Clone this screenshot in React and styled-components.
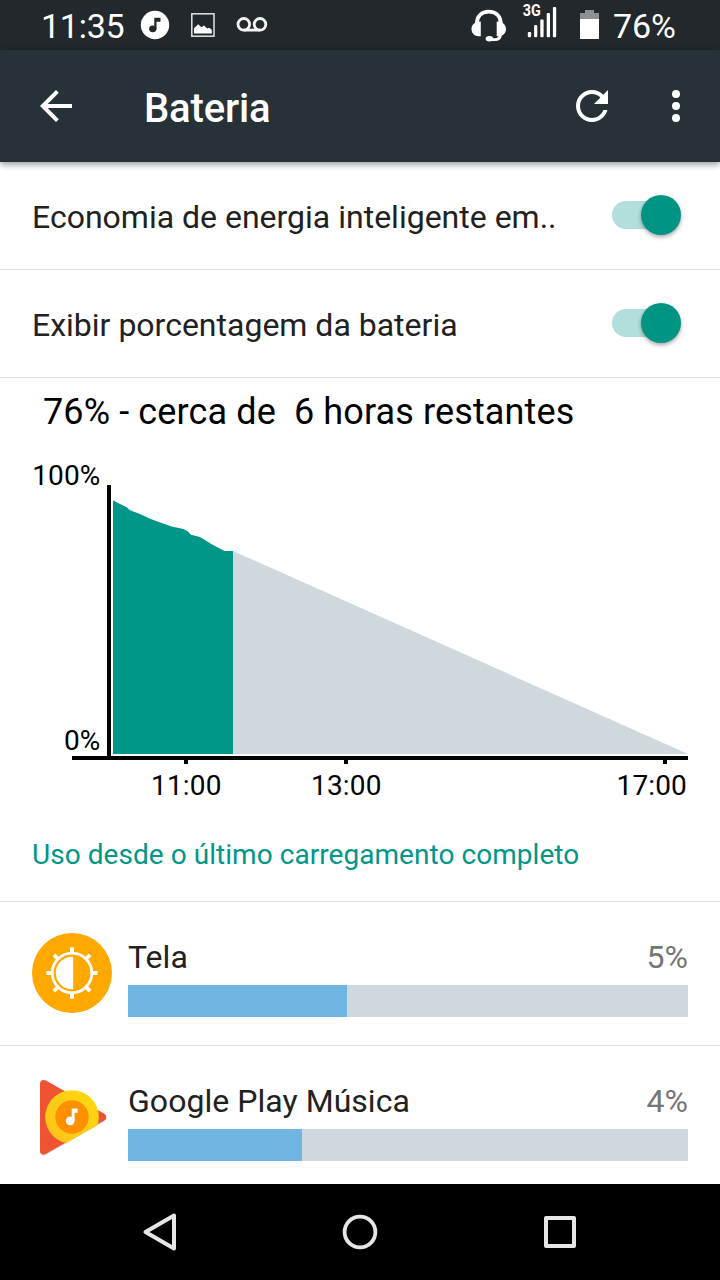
import React from "react";
import styled, { createGlobalStyle } from "styled-components";

const GlobalStyle = createGlobalStyle`
  *, *::before, *::after { box-sizing: border-box; }
  body { margin: 0; background: #fff; font-family: Roboto, "Noto Sans", sans-serif; }
  svg { display: block; flex: none; }
`;

const Screen = styled.div`
  width: 720px;
  height: 1280px;
  display: flex;
  flex-direction: column;
  overflow: hidden;
  background: #fff;
`;

const StatusBar = styled.header`
  flex: none;
  height: 50px;
  padding: 0 44px 0 41px;
  display: flex;
  justify-content: space-between;
  background: #22282b;
  color: #fff;
`;

const StatusGroup = styled.div`
  display: flex;
  gap: ${(p) => p.$gap}px;
`;

const StatusText = styled.span`
  font-size: 34px;
  letter-spacing: ${(p) => p.$spacing || 0}px;
  line-height: 52px;
  white-space: nowrap;
`;

const AppBar = styled.div`
  flex: none;
  height: 112px;
  padding: 0 20px 0 32px;
  display: flex;
  align-items: center;
  background: #273238;
  color: #fff;
  box-shadow: 0 2px 7px rgba(0, 0, 0, 0.45);
  z-index: 1;
`;

const Title = styled.h1`
  flex: 1;
  margin: 0;
  padding: 6px 0 0 64px;
  font-size: 40px;
  font-weight: 500;
  letter-spacing: -0.15px;
  line-height: 48px;
`;

const IconButton = styled.button`
  width: 48px;
  height: 48px;
  margin: 0 ${(p) => p.$after || 0}px 0 0;
  padding: 0;
  border: 0;
  background: none;
  color: inherit;
`;

const Content = styled.main`
  flex: 1;
  min-height: 0;
  overflow: hidden;
`;

const SettingRow = styled.label`
  height: 108px;
  padding: 2px 40px 0 32px;
  display: flex;
  align-items: center;
  justify-content: space-between;
  border-bottom: 1px solid #dfdfdf;
  font-size: 32px;
  color: #212121;
  white-space: nowrap;
`;

const Track = styled.span`
  width: 68px;
  height: 28px;
  margin-bottom: 3px;
  display: flex;
  align-items: center;
  justify-content: flex-end;
  border-radius: 14px;
  background: #b2dfdb;
`;

const Thumb = styled.span`
  flex: none;
  width: 40px;
  height: 40px;
  margin-right: -1px;
  border-radius: 50%;
  background: #009485;
  box-shadow: 0 2px 4px rgba(0, 0, 0, 0.35);
`;

const HistoryPanel = styled.section`
  height: 524px;
  border-bottom: 1px solid #dfdfdf;
`;

const Summary = styled.h2`
  margin: 0;
  padding: 12px 0 0 43px;
  height: 72px;
  font-size: 36px;
  font-weight: 400;
  letter-spacing: 0.12px;
  line-height: 44px;
  white-space: pre;
  color: #000;
`;

const Caption = styled.p`
  margin: 0;
  padding-left: 32px;
  font-size: 28px;
  letter-spacing: 0.05px;
  line-height: 34px;
  color: #009688;
`;

const UsageRow = styled.article`
  height: 144px;
  padding: 31px 32px 0;
  display: flex;
  gap: 16px;
  border-bottom: 1px solid #dfdfdf;
`;

const UsageBody = styled.div`
  flex: 1;
`;

const UsageHead = styled.div`
  height: 52px;
  padding-top: 5px;
  display: flex;
  justify-content: space-between;
  font-size: 32px;
  letter-spacing: 0.04px;
  line-height: 38px;
  color: #212121;
`;

const Percent = styled.span`
  color: #757575;
`;

const Meter = styled.div`
  height: 32px;
  background: #cfd8dd;
`;

const MeterFill = styled.div`
  width: ${(p) => p.$width}px;
  height: 100%;
  background: #6eb5e1;
`;

const NavBar = styled.nav`
  flex: none;
  height: 96px;
  padding: 0 136px;
  display: flex;
  align-items: center;
  justify-content: space-between;
  background: #000;
  color: #e6e6e6;
`;

const MusicStatusIcon = () => (
  <svg width="30" height="50" viewBox="140 0 30 50">
    <circle cx="155" cy="25" r="14.2" fill="#fff" />
    <ellipse cx="152.8" cy="28.8" rx="3.7" ry="3.4" fill="#22282b" />
    <path d="M154.3 17.8h6.2v3.9h-4V28.8h-2.2z" fill="#22282b" />
  </svg>
);

const PictureStatusIcon = () => (
  <svg width="24" height="50" viewBox="191 0 24 50">
    <rect x="191.8" y="13.8" width="22.2" height="22.4" fill="none" stroke="#d6dad9" strokeWidth="1.6" />
    <path d="M194 33.5v-5.2l4.2-4 3.2 3 2.6-1.8 3.2 3 2-.8 2.6 2v3.8z" fill="#fff" />
  </svg>
);

const VoicemailIcon = () => (
  <svg width="32" height="50" viewBox="235 0 32 50">
    <g fill="none" stroke="#f4f4f4" strokeWidth="2.8">
      <circle cx="242.8" cy="24.3" r="5.8" />
      <circle cx="259" cy="24.3" r="5.8" />
      <path d="M242.8 30.1H259" />
    </g>
  </svg>
);

const HeadsetIcon = () => (
  <svg width="36" height="50" viewBox="471 0 36 50">
    <path d="M476.8 24c0-8 5-12.4 12-12.4S500.8 16 500.8 24" fill="none" stroke="#fff" strokeWidth="3.8" />
    <path d="M480.8 21.5v14.7h-2.2c-4 0-7.1-3-7.1-7.2 0-3.7 2.7-6.5 6-7zM496.7 21.5v14.7h2.2c4 0 7.1-3 7.1-7.2 0-3.7-2.7-6.5-6-7z" fill="#fff" />
    <path d="M500.4 35c-.3 3-2.5 4.7-5.6 4.7h-3" fill="none" stroke="#fff" strokeWidth="2.8" />
    <ellipse cx="489.4" cy="38.8" rx="3.8" ry="2.7" fill="#fff" />
  </svg>
);

const SignalIcon = () => (
  <svg width="36" height="50" viewBox="522 0 36 50">
    <text x="522.8" y="15.8" fontSize="17" fontWeight="700" textLength="18" lengthAdjust="spacingAndGlyphs" fill="#fff">3G</text>
    <g fill="#fff">
      <rect x="527.8" y="32" width="3.4" height="5.2" rx="1" />
      <rect x="534.1" y="25" width="3.2" height="12.2" rx="1" />
      <rect x="540.3" y="19.4" width="3.3" height="17.8" rx="1" />
      <rect x="546.7" y="13" width="3.3" height="24.2" rx="1" />
      <rect x="552.9" y="7" width="3.3" height="30.2" rx="1" />
    </g>
  </svg>
);

const BatteryIcon = () => (
  <svg width="19" height="50" viewBox="580 0 19 50">
    <path d="M585 10h9v3h5v6.5h-19V13h5z" fill="#8d9092" />
    <path d="M580 19h19v20h-19z" fill="#fff" />
  </svg>
);

const BackArrow = () => (
  <svg width="48" height="48" viewBox="0 0 24 24" fill="currentColor">
    <path d="M20 11H7.83l5.59-5.59L12 4l-8 8 8 8 1.41-1.41L7.83 13H20v-2z" />
  </svg>
);

const RefreshIcon = () => (
  <svg width="48" height="48" viewBox="0 0 24 24" fill="currentColor">
    <path d="M17.65 6.35C16.2 4.9 14.21 4 12 4c-4.42 0-7.99 3.58-7.99 8s3.57 8 7.99 8c3.73 0 6.84-2.55 7.73-6h-2.08c-.82 2.33-3.04 4-5.65 4-3.31 0-6-2.69-6-6s2.69-6 6-6c1.66 0 3.14.69 4.22 1.78L13 11h7V4l-2.35 2.35z" />
  </svg>
);

const MoreIcon = () => (
  <svg width="48" height="48" viewBox="0 0 48 48" fill="currentColor">
    <circle cx="24" cy="12" r="4" />
    <circle cx="24" cy="24" r="4" />
    <circle cx="24" cy="36" r="4" />
  </svg>
);

const BatteryChart = () => (
  <svg width="720" height="388" viewBox="0 450 720 388" fontSize="28" letterSpacing="0.15">
    <path d="M233 551L688 754H233z" fill="#cfd8dd" />
    <path d="M113 500.3L120 504L126.7 507.3L130 510.3L140 514L150 518.7L171.5 526.5L183.5 529L188 531.5L191 534.7L200 537L211.7 544.3L224.5 551H233V754H113z" fill="#009688" />
    <path d="M107 485h4v271h577v4H667v4h-4v-4H348v4h-4v-4H188v4h-4v-4H72v-4h35z" fill="#000" />
    <text x="100.5" y="485" textAnchor="end">100%</text>
    <text x="100.5" y="750" textAnchor="end">0%</text>
    <text x="186.3" y="795" textAnchor="middle">11:00</text>
    <text x="346.3" y="795" textAnchor="middle">13:00</text>
    <text x="687" y="795" textAnchor="end">17:00</text>
  </svg>
);

const ScreenIcon = () => (
  <svg width="80" height="80" viewBox="-40 -40 80 80">
    <circle r="40" fill="#ffa800" />
    <circle r="19.8" fill="none" stroke="#fff" strokeWidth="2.8" />
    <path d="M1.2-16.2V16.2H0A16.2 16.2 0 0 1 0-16.2z" fill="#fff" />
    {[0, 45, 90, 135, 180, 225, 270, 315].map((angle) => (
      <path key={angle} d="M-2-25.6h4v5h-4z" transform={`rotate(${angle})`} fill="#fff" />
    ))}
  </svg>
);

const PlayMusicIcon = () => (
  <svg width="80" height="80" viewBox="32 1077 80 80">
    <defs>
      <clipPath id="lowerEdge">
        <path d="M32 1070H112V1117L44 1155.8H32z" />
      </clipPath>
      <linearGradient id="disc" x1="0" x2="1" y1="1" y2="0">
        <stop offset="0" stopColor="#fdc21c" />
        <stop offset="1" stopColor="#ffd90e" />
      </linearGradient>
    </defs>
    <path d="M40 1084c0-3.6 3-5 6-3.4l58 33c3 1.8 3 5.2 0 7l-58 33.2c-3 1.7-6 .2-6-3.3z" transform="translate(0 1)" fill="#000" opacity=".2" />
    <path d="M40 1084c0-3.6 3-5 6-3.4l58 33c3 1.8 3 5.2 0 7l-58 33.2c-3 1.7-6 .2-6-3.3z" fill="#f05331" />
    <g clipPath="url(#lowerEdge)">
      <circle cx="72" cy="1117" r="26.8" fill="url(#disc)" />
    </g>
    <circle cx="72" cy="1117" r="16.7" fill="#ff9000" />
    <circle cx="70.2" cy="1120.8" r="4.4" fill="#fff" />
    <path d="M71.7 1108.5h6v4.2h-3.1v8.3h-2.9z" fill="#fff" />
  </svg>
);

const Toggle = () => (
  <Track>
    <Thumb />
  </Track>
);

const settings = ["Economia de energia inteligente em..", "Exibir porcentagem da bateria"];

const usage = [
  { name: "Tela", percent: "5%", width: 219, Icon: ScreenIcon },
  { name: "Google Play Música", percent: "4%", width: 174, Icon: PlayMusicIcon },
];

export default function App() {
  return (
    <>
      <GlobalStyle />
      <Screen>
        <StatusBar>
          <StatusGroup $gap={21}>
            <StatusGroup $gap={16}>
              <StatusText $spacing={-0.25}>11:35</StatusText>
              <MusicStatusIcon />
            </StatusGroup>
            <PictureStatusIcon />
            <VoicemailIcon />
          </StatusGroup>
          <StatusGroup $gap={14}>
            <StatusGroup $gap={15}>
              <HeadsetIcon />
              <StatusGroup $gap={22}>
                <SignalIcon />
                <BatteryIcon />
              </StatusGroup>
            </StatusGroup>
            <StatusText>76%</StatusText>
          </StatusGroup>
        </StatusBar>
        <AppBar>
          <IconButton aria-label="Voltar"><BackArrow /></IconButton>
          <Title>Bateria</Title>
          <IconButton aria-label="Atualizar" $after={36}><RefreshIcon /></IconButton>
          <IconButton aria-label="Mais opções"><MoreIcon /></IconButton>
        </AppBar>
        <Content>
          {settings.map((label) => (
            <SettingRow key={label}>
              {label}
              <Toggle />
            </SettingRow>
          ))}
          <HistoryPanel>
            <Summary>{"76% - cerca de  6 horas restantes"}</Summary>
            <BatteryChart />
            <Caption>Uso desde o último carregamento completo</Caption>
          </HistoryPanel>
          {usage.map(({ name, percent, width, Icon }) => (
            <UsageRow key={name}>
              <Icon />
              <UsageBody>
                <UsageHead>
                  <span>{name}</span>
                  <Percent>{percent}</Percent>
                </UsageHead>
                <Meter>
                  <MeterFill $width={width} />
                </Meter>
              </UsageBody>
            </UsageRow>
          ))}
        </Content>
        <NavBar>
          <svg width="48" height="48" viewBox="136 1208 48 48" fill="none" stroke="currentColor" strokeWidth="4" strokeLinejoin="round">
            <path d="M174 1215.5V1248.5L145.5 1232z" />
          </svg>
          <svg width="48" height="48" viewBox="336 1208 48 48" fill="none" stroke="currentColor" strokeWidth="3.8">
            <circle cx="360" cy="1232" r="15.4" />
          </svg>
          <svg width="48" height="48" viewBox="536 1208 48 48" fill="none" stroke="currentColor" strokeWidth="4" strokeLinejoin="round">
            <rect x="546" y="1218" width="28" height="28" />
          </svg>
        </NavBar>
      </Screen>
    </>
  );
}
